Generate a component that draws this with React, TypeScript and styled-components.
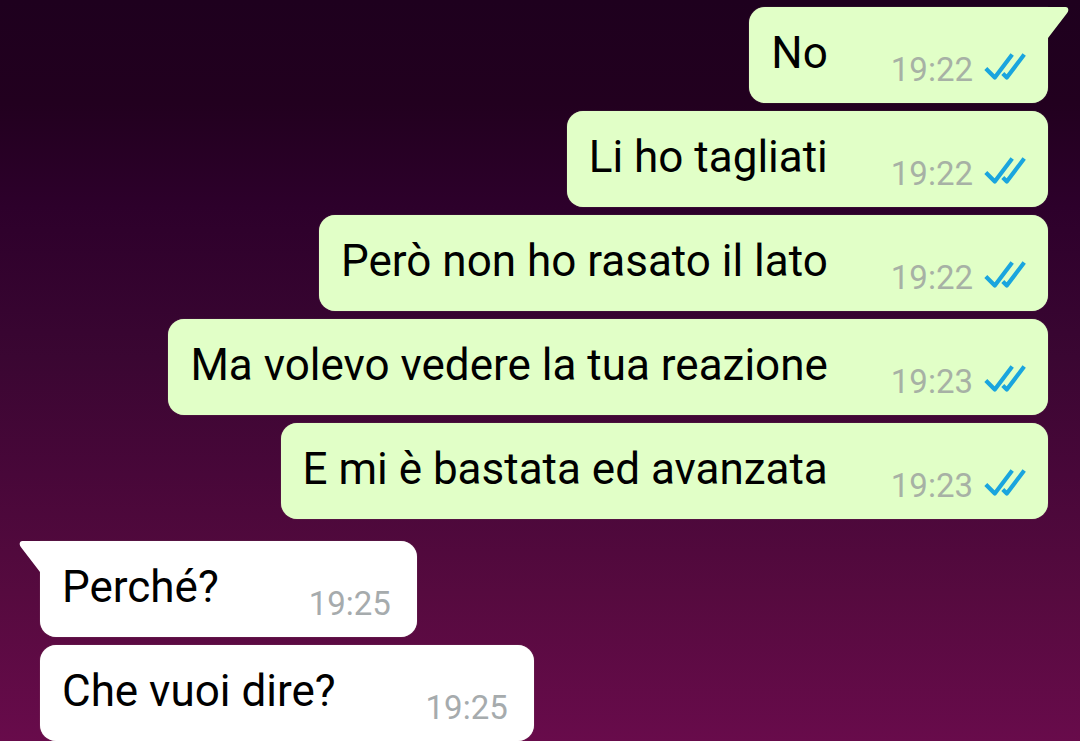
import React from "react";
import styled, { createGlobalStyle, css } from "styled-components";

const GlobalStyle = createGlobalStyle`
  *, *::before, *::after { box-sizing: border-box; }
  body {
    margin: 0;
    font-family: Roboto, "Liberation Sans", sans-serif;
    background: #1e001e;
  }
`;

type Side = "out" | "in";

const Chat = styled.main`
  display: flex;
  flex-direction: column;
  gap: 22px;
  min-height: 100vh;
  padding: 7px 32px 0 40px;
  background: linear-gradient(
    #1e001e 0%,
    #22001f 14%,
    #2d002b 28%,
    #3a0632 48%,
    #480739 64%,
    #560a3f 80%,
    #680b4b 100%
  );
`;

const Group = styled.ol<{ $side: Side }>`
  display: flex;
  flex-direction: column;
  align-items: ${({ $side }) => ($side === "out" ? "flex-end" : "flex-start")};
  gap: 8px;
  margin: 0;
  padding: 0;
  list-style: none;
`;

const Bubble = styled.li<{ $side: Side; $tail: boolean }>`
  position: relative;
  display: flex;
  align-items: flex-end;
  gap: 63px;
  max-width: 100%;
  padding: 20px 22px 15px 22px;
  border-radius: 16px;
  color: #000;
  background: ${({ $side }) => ($side === "out" ? "#e1ffc7" : "#fff")};
  box-shadow: 0 0 1px 0 rgba(200, 200, 180, 0.6);
  ${({ $side, $tail }) =>
    $tail &&
    ($side === "out"
      ? css`border-top-right-radius: 0;`
      : css`border-top-left-radius: 0;`)}
  ${({ $side }) => $side === "in" && css`padding-right: 26px; gap: 90px;`}
`;

const Text = styled.p`
  margin: 0;
  padding-bottom: 9px;
  font-size: 44px;
  line-height: 52px;
`;

const Meta = styled.span`
  display: flex;
  align-items: flex-start;
  gap: 11px;
`;

const Time = styled.time<{ $side: Side }>`
  font-size: 33px;
  line-height: 36px;
  color: ${({ $side }) => ($side === "out" ? "#a7b1a5" : "#a6abad")};
`;

const TailShape = styled.svg<{ $side: Side }>`
  position: absolute;
  top: 0;
  ${({ $side }) => ($side === "out" ? "left: 100%;" : "right: 100%; transform: scaleX(-1);")}
  width: 21px;
  height: 32px;
  fill: ${({ $side }) => ($side === "out" ? "#e1ffc7" : "#fff")};
`;

function Tail({ side }: { side: Side }) {
  return (
    <TailShape $side={side} viewBox="0 0 21 32" aria-hidden="true">
      <path d="M-1 0H17.5Q20.5 0.3 20.3 3.2Q20.2 4.8 19 6.3L0 31H-1Z" />
    </TailShape>
  );
}

const CheckIcon = styled.svg`
  width: 42px;
  height: 30px;
  fill: none;
  stroke: #1aa5de;
  stroke-width: 4.2;
  stroke-linecap: butt;
  stroke-linejoin: round;
`;

function ReadChecks() {
  return (
    <CheckIcon viewBox="0 0 42 30" role="img" aria-label="Letto">
      <path d="M1.8 16.4L10.8 25.4L28.2 2.6" />
      <path d="M18.8 21.4L22.8 25.4L40.2 2.6" />
    </CheckIcon>
  );
}

interface Message {
  text: string;
  time: string;
}

const sent: Message[] = [
  { text: "No", time: "19:22" },
  { text: "Li ho tagliati", time: "19:22" },
  { text: "Però non ho rasato il lato", time: "19:22" },
  { text: "Ma volevo vedere la tua reazione", time: "19:23" },
  { text: "E mi è bastata ed avanzata", time: "19:23" },
];

const received: Message[] = [
  { text: "Perché?", time: "19:25" },
  { text: "Che vuoi dire?", time: "19:25" },
];

function MessageGroup({ side, messages }: { side: Side; messages: Message[] }) {
  return (
    <Group $side={side}>
      {messages.map((message, index) => (
        <Bubble key={message.text} $side={side} $tail={index === 0}>
          {index === 0 && <Tail side={side} />}
          <Text>{message.text}</Text>
          <Meta>
            <Time $side={side}>{message.time}</Time>
            {side === "out" && <ReadChecks />}
          </Meta>
        </Bubble>
      ))}
    </Group>
  );
}

export default function App() {
  return (
    <>
      <GlobalStyle />
      <Chat>
        <MessageGroup side="out" messages={sent} />
        <MessageGroup side="in" messages={received} />
      </Chat>
    </>
  );
}
